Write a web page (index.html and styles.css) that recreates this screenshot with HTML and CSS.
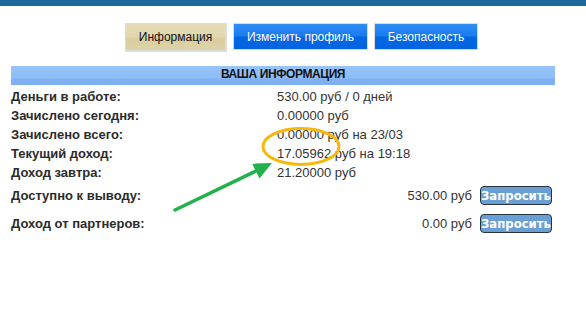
FILE: index.html
```html
<!DOCTYPE html>
<html lang="ru">
<head>
    <meta charset="UTF-8">
    <title>Ваша информация</title>
    <link rel="stylesheet" href="styles.css">
</head>
<body>
    <div class="topbar"></div>

    <div class="tabs">
        <a class="tab tab-info tab-active">Информация</a>
        <a class="tab tab-profile">Изменить профиль</a>
        <a class="tab tab-security">Безопасность</a>
    </div>

    <div class="info">
        <div class="info-head">ВАША ИНФОРМАЦИЯ</div>
        <div class="info-rows">
            <div class="label">Деньги в работе:</div>
            <div class="value">530.00 руб / 0 дней</div>
            <div class="label">Зачислено сегодня:</div>
            <div class="value">0.00000 руб</div>
            <div class="label">Зачислено всего:</div>
            <div class="value">0.00000 руб на 23/03</div>
            <div class="label">Текущий доход:</div>
            <div class="value">17.05962 руб на 19:18</div>
            <div class="label">Доход завтра:</div>
            <div class="value">21.20000 руб</div>
        </div>

        <div class="payout">
            <div class="label">Доступно к выводу:</div>
            <div class="payout-right">
                <span class="value">530.00 руб</span>
                <button class="btn-request">Запросить</button>
            </div>
        </div>
        <div class="payout">
            <div class="label">Доход от партнеров:</div>
            <div class="payout-right">
                <span class="value">0.00 руб</span>
                <button class="btn-request">Запросить</button>
            </div>
        </div>
    </div>

    <!-- annotation drawn on top of the screenshot -->
    <svg class="marks" width="586" height="315" viewBox="0 0 586 315">
        <ellipse cx="301" cy="146.5" rx="38" ry="18" fill="none" stroke="#f6b80e" stroke-width="3"/>
        <line x1="175" y1="210" x2="258" y2="170" stroke="#22b14c" stroke-width="3.5" stroke-linecap="round"/>
        <polygon points="272,163 252,163.6 259.5,178.5" fill="#22b14c"/>
    </svg>
</body>
</html>
```

FILE: styles.css
```css
body { margin: 0; font-family: "Liberation Sans", Arial, sans-serif; font-size: 13px; color: #333; background: #fff; position: relative; }
.topbar { height: 6px; background: #1d6a9a; }

.tabs { display: flex; gap: 6px; padding: 17px 0 0 125px; }
.tab { display: flex; align-items: center; justify-content: center; box-sizing: border-box; height: 27px; border: 1px solid #dcdcdc; color: #fff; font-size: 12px; white-space: nowrap; background: linear-gradient(#2e8ef6, #1a7bf0 48%, #0366e2 52%, #0064e0); cursor: pointer; }
.tab-info { width: 102px; }
.tab-profile { width: 135px; }
.tab-security { width: 104px; }
.tab-active { height: 29px; border-width: 1px 2px 2px 1px; color: #111; background: linear-gradient(#e6ddb8, #e1d7ae 50%, #d9cea0 55%, #ddd3a8); }

.info { margin: 14px 31px 0 11px; }
.info-head { height: 19px; line-height: 17px; text-align: center; font-weight: bold; font-size: 12px; letter-spacing: -0.4px; color: #111; background: linear-gradient(#97c4fa, #8dbcf7 65%, #7eb0f2 67%, #7eb0f2); }

.info-rows { display: grid; grid-template-columns: 266px 1fr; grid-auto-rows: 19px; align-items: center; padding-top: 2px; }
.label { font-weight: bold; font-size: 13px; color: #2b2b2b; }
.value { font-size: 13px; color: #333; }

.payout { display: flex; justify-content: space-between; align-items: center; height: 19px; margin-top: 4px; }
.payout + .payout { margin-top: 9px; }
.payout-right { display: flex; align-items: center; gap: 8px; padding-right: 3px; }
.btn-request { height: 19px; width: 72px; padding: 0; border: 1px solid #2a3440; border-radius: 4px; background: #6a9fd6; color: #fff; font-family: "DejaVu Sans Condensed", "DejaVu Sans", sans-serif; font-weight: bold; font-size: 13px; line-height: 15px; cursor: pointer; }

.marks { position: absolute; left: 0; top: 0; pointer-events: none; }
```
